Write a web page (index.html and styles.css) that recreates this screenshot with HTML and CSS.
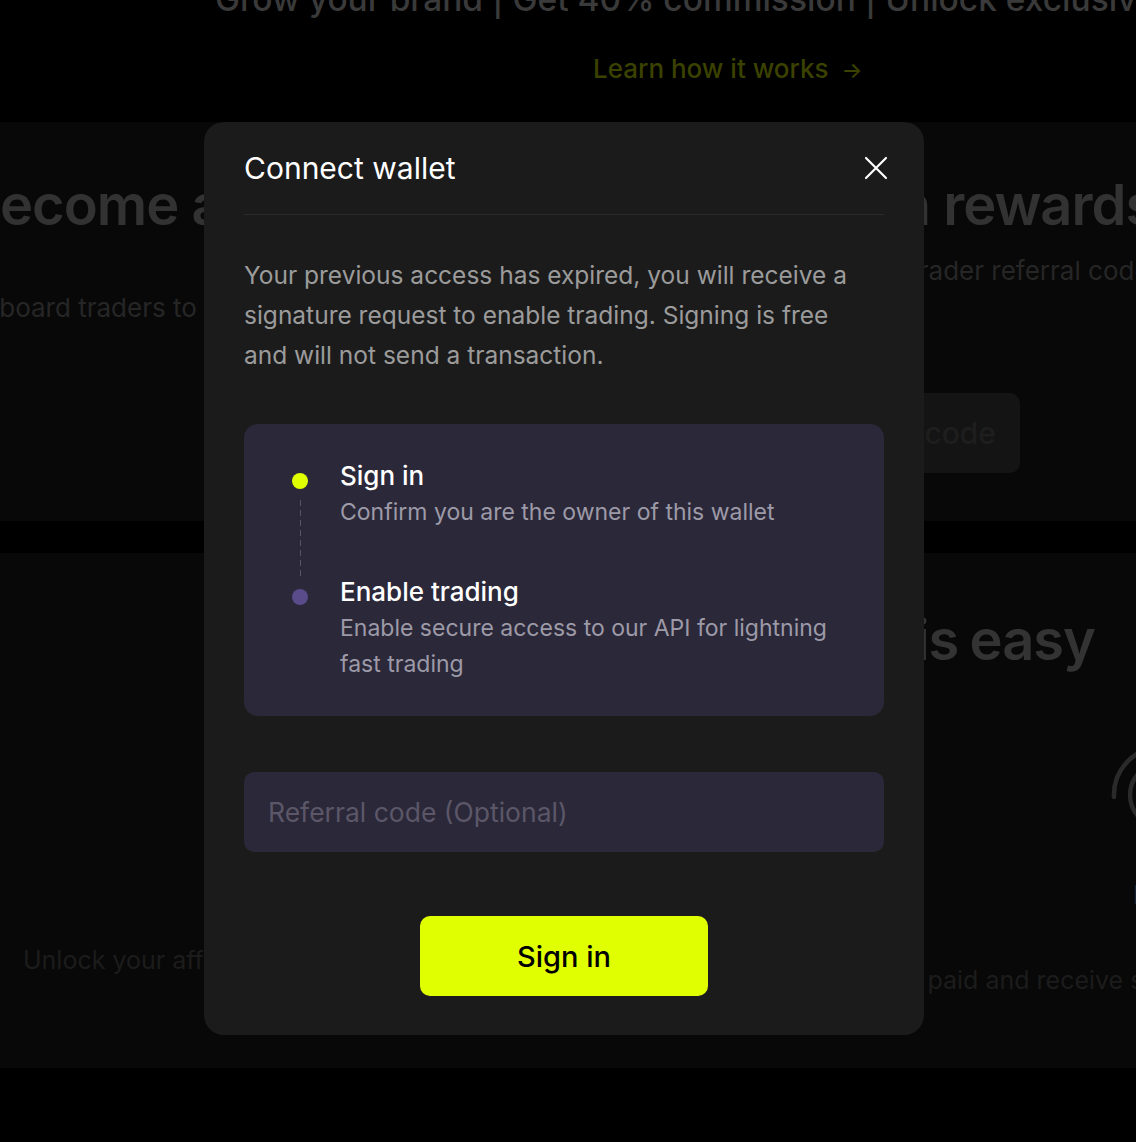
FILE: index.html
```html
<!DOCTYPE html>
<html lang="en">
<head>
<meta charset="utf-8">
<title>Connect wallet</title>
<link rel="stylesheet" href="styles.css">
</head>
<body>
<div class="page">
  <header class="intro">
    <p class="tagline">Grow your brand | Get 40% commission | Unlock exclusive rewards</p>
    <a class="learn" href="#">Learn how it works <span class="arrow">→</span></a>
  </header>

  <section class="hero">
    <div class="hero-left">
      <h1 class="hero-title">Become an affiliate</h1>
      <p class="hero-text hero-text-left">Onboard traders to earn commission</p>
    </div>
    <div class="hero-right">
      <h2 class="hero-title">Earn rewards</h2>
      <p class="hero-text hero-text-right">Use a Trader referral code</p>
      <button class="ghost-btn" type="button">Enter code</button>
    </div>
  </section>

  <section class="how">
    <h2 class="how-title">Becoming an affiliate is easy</h2>
    <div class="how-row">
      <div class="how-col how-col-left">
        <p class="how-text">Unlock your affiliate dashboard</p>
      </div>
      <div class="how-col how-col-right">
        <svg class="how-icon" width="100" height="100" viewBox="0 0 100 100" fill="none" stroke="#2a2a2a" stroke-width="4.5" stroke-linecap="round">
          <path d="M4 52 A48 48 0 0 1 52 2"/>
          <path d="M29.4 27.4 A32 32 0 0 0 29.4 72.6"/>
        </svg>
        <p class="how-name">Earn</p>
        <p class="how-text">Get paid and receive special rewards</p>
      </div>
    </div>
  </section>
</div>

<div class="modal-layer">
  <div class="modal" role="dialog" aria-labelledby="modal-title">
    <div class="modal-head">
      <h2 class="modal-title" id="modal-title">Connect wallet</h2>
      <button class="close-btn" type="button" aria-label="Close">
        <svg width="24" height="24" viewBox="0 0 24 24" fill="none" stroke="#ffffff" stroke-width="2.2" stroke-linecap="round">
          <path d="M2 2 L22 22 M22 2 L2 22"/>
        </svg>
      </button>
    </div>

    <p class="modal-text">Your previous access has expired, you will receive a signature request to enable trading. Signing is free and will not send a transaction.</p>

    <div class="steps">
      <div class="step step-first">
        <div class="marker">
          <span class="dot dot-active"></span>
          <span class="marker-line"></span>
        </div>
        <div class="step-body">
          <div class="step-title">Sign in</div>
          <div class="step-desc">Confirm you are the owner of this wallet</div>
        </div>
      </div>
      <div class="step">
        <div class="marker">
          <span class="dot dot-pending"></span>
        </div>
        <div class="step-body">
          <div class="step-title">Enable trading</div>
          <div class="step-desc">Enable secure access to our API for lightning fast trading</div>
        </div>
      </div>
    </div>

    <input class="ref-input" type="text" placeholder="Referral code (Optional)">

    <button class="primary-btn" type="button">Sign in</button>
  </div>
</div>
</body>
</html>
```

FILE: styles.css
```css
* {
  box-sizing: border-box;
}

html,
body {
  margin: 0;
  padding: 0;
}

body {
  width: 1136px;
  height: 1142px;
  overflow: hidden;
  background: #000;
  font-family: Inter, "Noto Sans", sans-serif;
  position: relative;
}

.page {
  width: 1136px;
  white-space: nowrap;
}

/* ---------- background page ---------- */
.intro {
  height: 122px;
  display: flex;
  flex-direction: column;
  align-items: flex-start;
}

.tagline {
  margin: -21px 0 0 215px;
  font-size: 33.5px;
  line-height: 40px;
  font-weight: 500;
  color: #3a3a3a;
}

.learn {
  margin: 34px 0 0 593px;
  font-size: 26px;
  line-height: 32px;
  font-weight: 500;
  color: #3b4200;
  text-decoration: none;
}

.learn .arrow {
  margin-left: 6px;
  font-size: 22px;
}

.hero {
  height: 399px;
  margin-bottom: 32px;
  background: #080808;
  display: flex;
  overflow: hidden;
}

.hero-left {
  margin-left: -36px;
  width: 800px;
  flex: none;
}

.hero-right {
  margin-left: 47px;
  flex: none;
}

.hero-title {
  margin: 50px 0 0;
  font-size: 56px;
  line-height: 66px;
  font-weight: 600;
  letter-spacing: -1px;
  color: #323232;
}

.hero-text {
  font-size: 26px;
  line-height: 32px;
  color: #262626;
  margin: 0;
}

.hero-text-left {
  margin-top: 54px;
}

.hero-text-right {
  margin: 17px 0 0 15px;
}

.ghost-btn {
  display: block;
  margin-top: 106px;
  width: 209px;
  height: 80px;
  border: none;
  border-radius: 10px;
  background: #141414;
  color: #1e1e1e;
  font-family: inherit;
  font-size: 30px;
  font-weight: 500;
  text-align: right;
  padding: 0 24px 0 0;
}

.how {
  height: 515px;
  background: #080808;
  overflow: hidden;
}

.how-title {
  margin: 0;
  padding: 54px 41px 0 0;
  text-align: right;
  font-size: 56px;
  line-height: 66px;
  font-weight: 600;
  letter-spacing: -1px;
  word-spacing: -2px;
  color: #333333;
}

.how-row {
  display: flex;
  margin-top: 72px;
}

.how-col-left {
  margin-left: 23px;
  width: 856px;
  flex: none;
}

.how-col-right {
  flex: none;
}

.how-icon {
  display: block;
  margin-left: 231px;
}

.how-text {
  margin: 0;
  font-size: 25px;
  line-height: 32px;
  color: #1c1c1c;
}

.how-col-left .how-text {
  margin-top: 199px;
}

.how-name {
  margin: 34px 0 0 254px;
  font-size: 26px;
  line-height: 32px;
  font-weight: 600;
  color: #1d2330;
}

.how-col-right .how-text {
  margin-top: 53px;
}

/* ---------- modal ---------- */
.modal-layer {
  position: fixed;
  inset: 0;
  padding: 122px 0 0 204px;
}

.modal {
  width: 720px;
  background: #1b1b1b;
  border-radius: 20px;
  padding: 26px 40px 39px;
}

.modal-head {
  display: flex;
  align-items: center;
  justify-content: space-between;
  padding-bottom: 26px;
  border-bottom: 1px solid #2a2a2a;
}

.modal-title {
  margin: 0;
  font-size: 30px;
  line-height: 40px;
  font-weight: 400;
  color: #ffffff;
}

.close-btn {
  width: 24px;
  height: 24px;
  margin-right: -4px;
  padding: 0;
  border: none;
  background: none;
  display: flex;
}

.modal-text {
  margin: 40px 0 0;
  max-width: 615px;
  font-size: 24.5px;
  line-height: 40px;
  font-weight: 400;
  color: #9b9b9b;
}

.steps {
  margin-top: 49px;
  background: #2b2839;
  border-radius: 14px;
  padding: 34px 40px 34px 48px;
}

.step {
  display: flex;
  gap: 32px;
}

.step-first .step-body {
  padding-bottom: 44px;
}

.marker {
  width: 16px;
  flex: none;
  display: flex;
  flex-direction: column;
  align-items: center;
}

.dot {
  width: 16px;
  height: 16px;
  border-radius: 50%;
  margin-top: 15px;
  flex: none;
}

.dot-active {
  background: #e0ff00;
}

.dot-pending {
  background: #5a4b8b;
}

.marker-line {
  flex: 1;
  width: 1px;
  margin: 11px 0 -2px;
  background: repeating-linear-gradient(to bottom, #58546a 0 6px, transparent 6px 10px);
}

.step-title {
  font-size: 26px;
  line-height: 36px;
  font-weight: 500;
  color: #ffffff;
}

.step-desc {
  font-size: 23px;
  line-height: 36px;
  color: #9d9aa8;
}

.ref-input {
  display: block;
  width: 100%;
  height: 80px;
  margin-top: 56px;
  padding: 0 24px;
  border: none;
  border-radius: 10px;
  background: #2b2839;
  color: #ffffff;
  font-family: inherit;
  font-size: 26.5px;
  outline: none;
}

.ref-input::placeholder {
  color: #5b5768;
}

.primary-btn {
  display: block;
  width: 288px;
  height: 80px;
  margin: 64px auto 0;
  border: none;
  border-radius: 10px;
  background: #e0ff00;
  color: #000000;
  font-family: inherit;
  font-size: 29px;
  font-weight: 500;
}
```
